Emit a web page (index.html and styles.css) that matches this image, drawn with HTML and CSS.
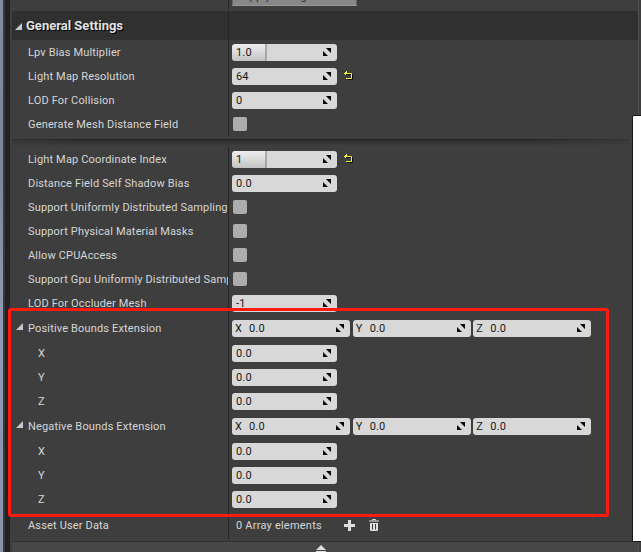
FILE: index.html
```html
<!DOCTYPE html>
<html lang="en">
<head>
<meta charset="utf-8">
<title>General Settings</title>
<link rel="stylesheet" href="styles.css">
</head>
<body>
<svg class="defs" width="0" height="0">
  <symbol id="spin" viewBox="0 0 8 8"><path d="M3 0H8V5ZM0 3L5 8H0Z" fill="#000"/></symbol>
  <symbol id="undo" viewBox="0 0 9 9"><path d="M2 3.500H8.500V8.500H3" fill="none" stroke="#111"/><path d="M0 2.500H7.500V7.500H2M1.500 1V4M2.500 0V2" fill="none" stroke="#f5f53c"/></symbol>
</svg>
<div class="app">
  <div class="viewport"></div>
  <div class="frame"></div>
  <main class="panel">
    <div class="previous"><div class="name"></div><div class="value"><span class="apply">Apply Changes</span></div></div>
    <header class="heading"><svg class="arrow" viewBox="0 0 7 7"><path d="M7 0V7H0Z"/></svg><h1>General Settings</h1></header>
    <section class="rows" id="basic"></section>
    <div class="separator"></div>
    <section class="rows" id="advanced"></section>
    <footer class="expander"><svg width="12" height="8" viewBox="0 0 12 8"><path d="M6 0L11 5H1ZM1 6H11V8H1Z" fill="#ddd"/></svg></footer>
  </main>
  <div class="edge"></div>
  <div class="highlight"></div>
  <div class="window"></div>
</div>
<script src="rows.js"></script>
</body>
</html>
```
FILE: styles.css
```css
* { box-sizing: border-box; }
body { margin: 0; background: #3e3e3e; font: 11px/16px Roboto, "Liberation Sans", sans-serif; color: #d6d6d6; overflow: hidden; letter-spacing: .16px; }
.defs { position: absolute; }
.app { display: flex; width: 641px; height: 552px; position: relative; overflow: hidden; }
.viewport { width: 3px; background: linear-gradient(#828b9f, #7b859a 30%, #929bb1 60%, #8992a7); }
.frame { width: 7px; background: linear-gradient(90deg, #393939 2px, #222 2px); }
.panel { flex: 1; min-width: 0; padding-left: 2px; display: flex; flex-direction: column; }
.previous { height: 11px; display: flex; overflow: hidden; }
.previous .name { height: 9px; }
.apply { display: block; width: 125px; height: 18px; margin-top: -12px; padding-left: 9px; border: 1px solid #666; border-bottom-color: #999; background: #888; color: #303030; line-height: 16px; letter-spacing: .3px; flex: none; }
.previous .value { align-items: flex-start; }
.heading { height: 29px; flex: none; display: flex; align-items: center; background: linear-gradient(90deg, transparent 216px, #252525 216px 217px, transparent 217px), #303030; border-radius: 3px 0 0 0; }
.heading .arrow { margin: 2px 4px 0 3px; }
.heading h1 { margin: 0; font-size: 13px; font-weight: 700; letter-spacing: 0; color: #e2e2e2; text-shadow: 1px 1px #000; }
.arrow { width: 7px; height: 7px; flex: none; fill: #c8c8c8; }
.row { display: flex; height: 24px; }
.row.group { height: 26px; }
.row.last { height: 28px; }
.name { width: 217px; flex: none; border-right: 1px solid #252525; padding: 1px 0 0 16px; display: flex; align-items: center; overflow: hidden; white-space: nowrap; }
.name.child { padding-left: 26px; }
.group .name { padding-left: 4px; }
.group .arrow { margin: -4px 5px 0 0; }
.value { display: flex; align-items: center; padding-left: 3px; }
.field { width: 105px; height: 17px; border-radius: 3px; background: #d8d8d8; color: #181818; padding: 1px 6px 0 4px; display: flex; align-items: center; }
.field .spin { width: 8px; height: 8px; margin: -1px 0 0 auto; }
.field.slider { background: linear-gradient(90deg, transparent 33px, #777 34px, #d8d8d8 35px), linear-gradient(#eee, #c4c4c4); }
.vector { display: grid; grid-template-columns: repeat(3, 118px); gap: 2.67px; }
.vector .field { width: auto; }
.axis { width: 14px; margin-left: -1px; }
.check { width: 14px; height: 14px; border-radius: 2px; background: #adadad; margin-left: 1px; }
.undo { width: 9px; height: 9px; margin: -1px 0 0 7px; }
.count { margin-left: 4px; padding-top: 1px; width: 87px; letter-spacing: .22px; }
.plus { width: 11px; height: 11px; margin-left: 21px; }
.trash { width: 10px; height: 12px; margin-left: 14px; }
.separator { height: 8px; margin: 3px 9px 0 0; border-top: 1px solid #252525; background: linear-gradient(#2f2f2f, transparent 6px); flex: none; -webkit-mask-image: linear-gradient(90deg, #0008, #000 60px, #000 85%, #0006); }
.expander { height: 11px; margin-top: 2px; border-top: 1px solid #303030; background: #474747; display: flex; justify-content: center; padding: 3px 8px 0 0; }
.edge { width: 3px; background: linear-gradient(90deg, #535353 1px, #3e3e3e 1px); opacity: .8; }
.highlight { position: absolute; left: 8px; top: 308px; width: 601px; height: 209px; border: 3px solid #ff1b0d; border-radius: 3px; }
.window { position: absolute; left: 632px; top: 115px; width: 10px; height: 427px; background: #fff; border: 1px solid #151515; border-radius: 2px 0 0 0; }
```
FILE: rows.js
```js
const spin = '<svg class="spin"><use href="#spin"/></svg>';
const field = (v, cls = '') => `<div class="field ${cls}">${v}${spin}</div>`;
const undo = '<svg class="undo"><use href="#undo"/></svg>';
const check = '<div class="check"></div>';
const vector = '<div class="vector">' + ['X', 'Y', 'Z'].map(a => field(`<span class="axis">${a}</span>0.0`)).join('') + '</div>';
const row = (name, value, cls = '', child = '') =>
  `<div class="row ${cls}"><div class="name ${child}">${cls === 'group' ? '<svg class="arrow" viewBox="0 0 7 7"><path d="M7 0V7H0Z"/></svg>' : ''}${name}</div><div class="value">${value}</div></div>`;
const group = name => row(name, vector, 'group') + ['X', 'Y', 'Z'].map(a => row(a, field('0.0'), '', 'child')).join('');

document.getElementById('basic').innerHTML =
  row('Lpv Bias Multiplier', field('1.0', 'slider')) +
  row('Light Map Resolution', field('64') + undo) +
  row('LOD For Collision', field('0')) +
  row('Generate Mesh Distance Field', check);

document.getElementById('advanced').innerHTML =
  row('Light Map Coordinate Index', field('1', 'slider') + undo) +
  row('Distance Field Self Shadow Bias', field('0.0')) +
  row('Support Uniformly Distributed Sampling', check) +
  row('Support Physical Material Masks', check) +
  row('Allow CPUAccess', check) +
  row('Support Gpu Uniformly Distributed Sampling', check) +
  row('LOD For Occluder Mesh', field('-1')) +
  group('Positive Bounds Extension') +
  group('Negative Bounds Extension') +
  row('Asset User Data', '<span class="count">0 Array elements</span>' +
    '<svg class="plus" viewBox="0 0 11 11"><path d="M4 0H7V4H11V7H7V11H4V7H0V4H4Z" fill="#ddd"/></svg>' +
    '<svg class="trash" viewBox="0 0 10 12"><path d="M3.500 1.500V.5H6.500V1.500M0 2H10" fill="none" stroke="#ddd"/><path d="M1 4H9V11Q9 12 8 12H2Q1 12 1 11Z" fill="#ddd"/><path d="M3.500 5V10.500M6.500 5V10.500" stroke="#3e3e3e"/></svg>', 'last');
```
